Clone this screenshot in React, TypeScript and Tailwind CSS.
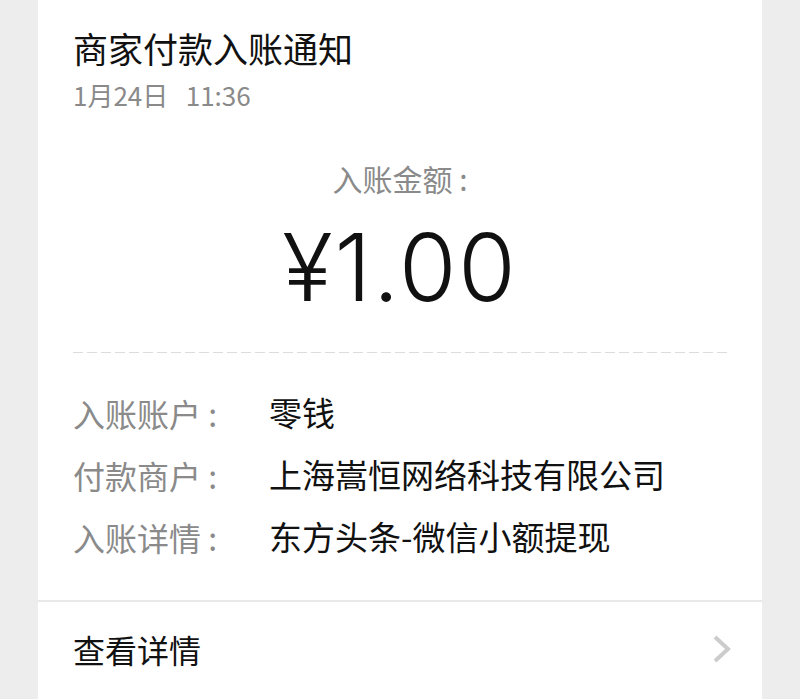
const cjk = "font-['PingFang_SC','Noto_Sans_CJK_SC',sans-serif]";

const rows = [
  { label: "入账账户", value: "零钱" },
  { label: "付款商户", value: "上海嵩恒网络科技有限公司" },
  { label: "入账详情", value: "东方头条-微信小额提现" },
];

export default function App() {
  return (
    <div className={`flex h-[699px] w-full justify-center overflow-hidden bg-[#ededed] ${cjk}`}>
      <div className="flex w-[724px] flex-col bg-white">
        <div className="px-[35px] pt-[28px]">
          <h1 className="text-[35px] leading-[40px] text-[#111]">商家付款入账通知</h1>
          <p className="mt-[12px] text-[26px] leading-[30px] text-[#8a8a8a]">
            1月24日&nbsp;&nbsp;&nbsp;11:36
          </p>

          <div className="mt-[50px] flex flex-col items-center">
            <span className="text-[30px] leading-[36px] text-[#8a8a8a]">入账金额&nbsp;:</span>
            <span className="mt-[19px] font-['Inter',sans-serif] text-[93px] font-light leading-[104px] tracking-[2px] text-[#111]">
              ¥1.00
            </span>
          </div>

          <div className="mt-[33px] h-px bg-[repeating-linear-gradient(to_right,#dcdcdc_0_10px,transparent_10px_14px)]" />

          <div className="flex flex-col pb-[32px] pt-[29px]">
            {rows.map((r) => (
              <div key={r.label} className="flex h-[62px] items-center">
                <span className="w-[196px] shrink-0 text-[32px] text-[#8a8a8a]">{r.label}&nbsp;:</span>
                <span className="text-[33px] text-[#111]">{r.value}</span>
              </div>
            ))}
          </div>
        </div>

        <div className="h-[2px] bg-[#e9e9e9]" />

        <div className="flex h-[100px] items-center justify-between pb-[2px] pl-[35px] pr-[30px]">
          <span className="text-[32px] text-[#111]">查看详情</span>
          <svg width="20" height="28" viewBox="0 0 20 28" fill="none">
            <path d="M3 2 L16 14 L3 26" stroke="#cccccc" strokeWidth="4" />
          </svg>
        </div>
      </div>
    </div>
  );
}
